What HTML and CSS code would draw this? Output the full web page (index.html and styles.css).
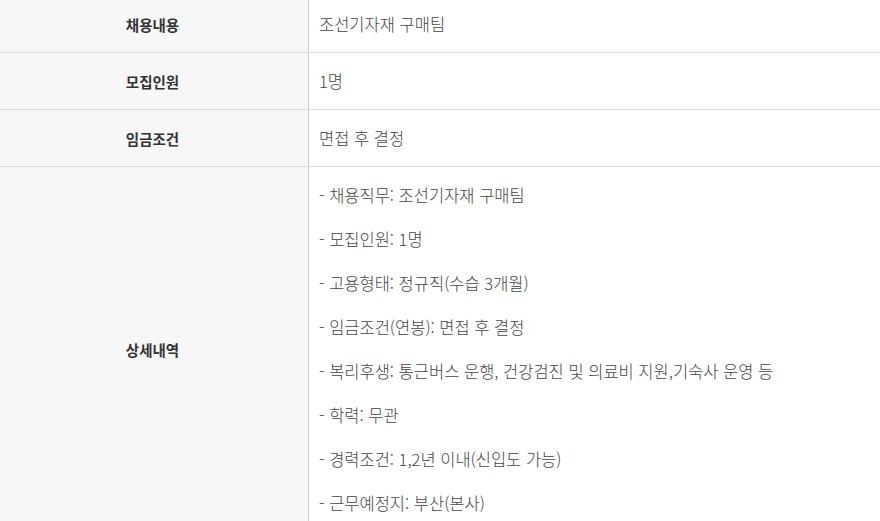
FILE: index.html
```html
<!DOCTYPE html>
<html lang="ko">
<head>
<meta charset="utf-8">
<link rel="stylesheet" href="styles.css">
</head>
<body>
<div class="table">
  <div class="row">
    <div class="th">채용내용</div>
    <div class="td">조선기자재 구매팀</div>
  </div>
  <div class="row">
    <div class="th">모집인원</div>
    <div class="td">1명</div>
  </div>
  <div class="row">
    <div class="th">임금조건</div>
    <div class="td">면접 후 결정</div>
  </div>
  <div class="row">
    <div class="th">상세내역</div>
    <div class="td detail">
      <p>- 채용직무: 조선기자재 구매팀</p>
      <p>- 모집인원: 1명</p>
      <p>- 고용형태: 정규직(수습 3개월)</p>
      <p>- 임금조건(연봉): 면접 후 결정</p>
      <p>- 복리후생: 통근버스 운행, 건강검진 및 의료비 지원,기숙사 운영 등</p>
      <p>- 학력: 무관</p>
      <p>- 경력조건: 1,2년 이내(신입도 가능)</p>
      <p>- 근무예정지: 부산(본사)</p>
    </div>
  </div>
</div>
</body>
</html>
```
FILE: styles.css
```css
html, body {
  margin: 0;
  padding: 0;
  background: #fff;
}
body {
  font-family: "Noto Sans CJK KR", "Noto Sans", sans-serif;
  overflow: hidden;
}
.table {
  margin-top: -5px;
  border-top: 1px solid #ddd;
}
.row {
  display: grid;
  grid-template-columns: 308px 1fr;
  border-bottom: 1px solid #ddd;
}
.th {
  background: #f7f7f7;
  display: flex;
  align-items: center;
  justify-content: center;
  padding-right: 3px;
  font-size: 14.5px;
  font-weight: 700;
  color: #333;
}
.td {
  border-left: 1px solid #ccc;
  min-height: 56px;
  box-sizing: border-box;
  display: flex;
  align-items: center;
  padding: 0 10px;
  font-size: 16.5px;
  font-weight: 300;
  color: #444;
}
.detail {
  flex-direction: column;
  align-items: flex-start;
  padding: 17px 10px;
  gap: 22px;
}
.detail p {
  margin: 0;
  line-height: 22px;
}
```
